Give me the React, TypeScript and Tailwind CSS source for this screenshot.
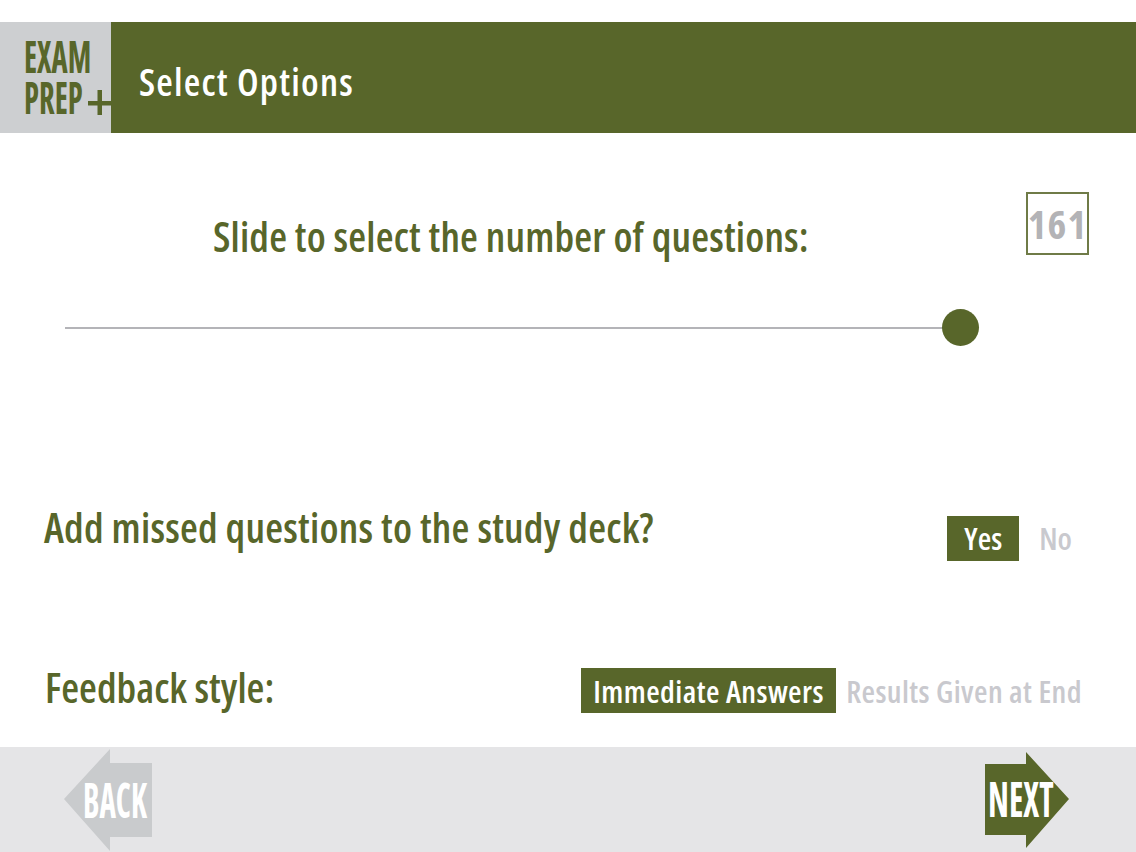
export default function App() {
  return (
    <div className="flex h-[852px] w-[1136px] flex-col overflow-hidden bg-white pt-[22px] font-['Open_Sans',sans-serif] [font-stretch:75%]">
      {/* Header */}
      <header className="flex h-[111px] shrink-0 bg-[#58662a]">
        <div className="relative h-full w-[111px] shrink-0 bg-[#cdcfd1] pl-[24px] pt-[13px] text-[45px] font-bold leading-[41px] text-[#58662a]">
          <div className="origin-left scale-x-[0.68]">EXAM</div>
          <div className="origin-left scale-x-[0.68]">PREP</div>
          <svg className="absolute left-[88px] top-[68px]" width="23" height="25" viewBox="0 0 23 25">
            <path d="M0 11h23v4.5H0zM9.5 0h4.5v25H9.5z" fill="#58662a" />
          </svg>
        </div>
        <h1 className="flex-1 pl-[28px] pt-[36px] text-[38px] font-semibold leading-[46px] tracking-[1.2px] text-white">
          Select Options
        </h1>
      </header>

      <main className="flex flex-1 flex-col">
        {/* Question count */}
        <section className="flex items-start justify-between pl-[213px] pr-[47px] pt-[59px]">
          <h2 className="mt-[19px] whitespace-nowrap text-[41px] font-semibold leading-[50px] tracking-[0.17px] text-[#58662a]">
            Slide to select the number of questions:
          </h2>
          <div className="flex h-[63px] w-[63px] items-center justify-center border-2 border-[#6f7b47] text-[40px] font-bold leading-none tracking-[1px] text-[#b3b3b6]">
            161
          </div>
        </section>

        <div className="ml-[65px] mt-[48px] flex items-center">
          <div className="h-[2px] w-[880px] bg-[#b4b4b8]" />
          <div className="-ml-[3px] h-[37px] w-[37px] rounded-full bg-[#58662a]" />
        </div>

        {/* Study deck */}
        <section className="mt-[169px] flex items-start justify-between pl-[44px] pr-[64px]">
          <h2 className="-mt-[10px] whitespace-nowrap text-[41px] font-semibold leading-[45px] tracking-[0.23px] text-[#58662a]">
            Add missed questions to the study deck?
          </h2>
          <div className="flex items-center gap-[20px] text-[31px] font-semibold">
            <span className="flex h-[45px] w-[72px] items-center justify-center bg-[#58662a] text-white">Yes</span>
            <span className="text-[#c9c9ce]">No</span>
          </div>
        </section>

        {/* Feedback */}
        <section className="mt-[106px] flex items-start justify-between pl-[45px] pr-[54px]">
          <h2 className="-mt-[3px] whitespace-nowrap text-[41px] font-semibold leading-[45px] text-[#58662a]">
            Feedback style:
          </h2>
          <div className="flex items-center gap-[10px] whitespace-nowrap text-[31px] font-semibold tracking-[0.4px]">
            <span className="flex h-[45px] w-[255px] items-center justify-center bg-[#58662a] text-white">Immediate Answers</span>
            <span className="text-[#c9c9ce]">Results Given at End</span>
          </div>
        </section>
      </main>

      {/* Footer nav */}
      <footer className="flex h-[105px] shrink-0 items-center justify-between bg-[#e5e5e7] pl-[64px] pr-[67px]">
        <div className="relative h-[102px] w-[88px]">
          <svg width="88" height="102" viewBox="0 0 88 102" className="block">
            <path d="M0 50 46 0v14h42v74H46v14z" fill="#c9cbcd" />
          </svg>
          <span className="absolute left-[19px] top-[21px] origin-left scale-x-[0.65] whitespace-nowrap text-[48px] font-bold leading-[60px] text-white">BACK</span>
        </div>
        <div className="relative h-[96px] w-[84px]">
          <svg width="84" height="96" viewBox="0 0 84 96" className="block">
            <path d="M0 12h41V0l43 47-43 49V83H0z" fill="#58662a" />
          </svg>
          <span className="absolute left-[3px] top-[17px] origin-left scale-x-[0.7] whitespace-nowrap text-[48px] font-bold leading-[60px] text-white">NEXT</span>
        </div>
      </footer>
    </div>
  )
}
